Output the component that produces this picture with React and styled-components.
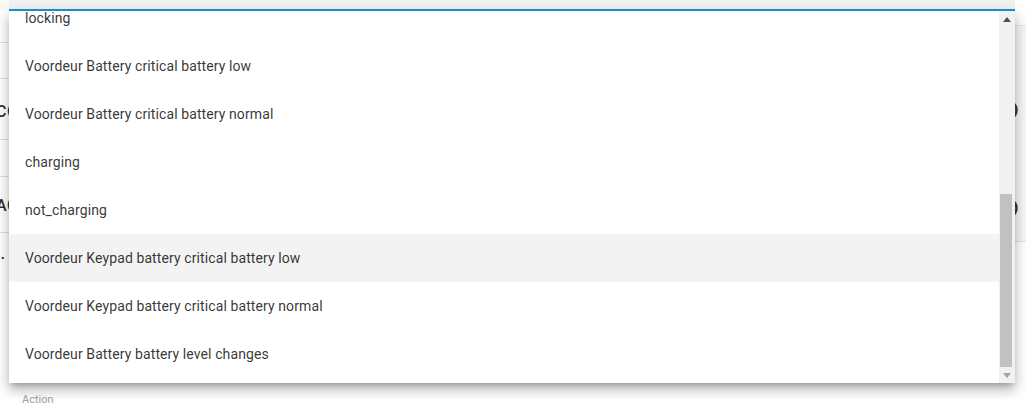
import React from "react";
import styled, { createGlobalStyle } from "styled-components";

const Global = createGlobalStyle`
  html, body { margin: 0; padding: 0; background: #ffffff; }
  body { font-family: Roboto, "Noto Sans", Arial, sans-serif; -webkit-font-smoothing: antialiased; }
  #root { width: 1026px; height: 403px; }
`;

const Page = styled.div`
  position: relative;
  width: 1026px;
  height: 403px;
  overflow: hidden;
  background: #ffffff;
`;

/* ---------- content behind the menu ---------- */
const Behind = styled.div`
  display: flex;
  flex-direction: column;
  height: 100%;
`;

const FieldRow = styled.div`
  display: flex;
  height: 11px;
  flex-shrink: 0;
`;

const FieldGutter = styled.div`
  width: 9px;
  background: #fbfaf6;
`;

const TextField = styled.div`
  width: 1006px;
  background: #f3f2f2;
  border-bottom: 2px solid #1e95d4;
  box-sizing: border-box;
`;

const Body = styled.div`
  display: flex;
  flex: 1;
  min-height: 0;
`;

const LeftColumn = styled.div`
  flex: 1;
  display: flex;
  flex-direction: column;
  margin-left: -4px;
`;

const Row = styled.div`
  height: ${(p) => p.$h}px;
  flex-shrink: 0;
  display: flex;
  align-items: center;
  border-bottom: ${(p) => (p.$line ? "1px solid #e0e0e0" : "none")};
  box-sizing: border-box;
  font-size: 16px;
  font-weight: 500;
  color: #303030;
  letter-spacing: 0.5px;
  padding-top: ${(p) => p.$pt || 0}px;
`;

const Caption = styled.div`
  margin-top: auto;
  margin-bottom: -3px;
  padding: 0 0 0 26px;
  height: 12px;
  font-size: 11px;
  color: #a0a0a0;
  line-height: 12px;
`;

const RightColumn = styled.div`
  width: 11px;
  display: flex;
  flex-direction: column;
`;

const RightCard = styled.div`
  margin-top: 14px;
  height: 215px;
  background: #f6f6f6;
  border-top: 1px solid #e6e6e6;
  border-bottom: 1px solid #e0e0e0;
  display: flex;
  flex-direction: column;
`;

const RoundIconSlot = styled.div`
  height: ${(p) => p.$h}px;
  position: relative;
`;

const RingIcon = styled.svg`
  position: absolute;
  left: -19px;
  top: ${(p) => p.$top}px;
`;

/* ---------- dropdown menu ---------- */
const Menu = styled.div`
  position: absolute;
  left: 9px;
  top: 11px;
  width: 1006px;
  height: 372px;
  background: #ffffff;
  display: flex;
  box-shadow: 0 5px 5px -3px rgba(0, 0, 0, 0.22), 0 8px 10px 1px rgba(0, 0, 0, 0.14),
    0 3px 14px 2px rgba(0, 0, 0, 0.12);
`;

const ListViewport = styled.div`
  flex: 1;
  overflow: hidden;
`;

const List = styled.ul`
  list-style: none;
  margin: -17px 0 0 0;
  padding: 0;
`;

const Item = styled.li`
  height: 48px;
  display: flex;
  align-items: center;
  padding-left: 16px;
  font-size: 14px;
  color: rgba(0, 0, 0, 0.8);
  letter-spacing: 0.1px;
  background: ${(p) => (p.$active ? "#f3f3f3" : "transparent")};
`;

const Scrollbar = styled.div`
  width: 16px;
  background: #f1f1f1;
  display: flex;
  flex-direction: column;
`;

const ArrowButton = styled.div`
  height: 16px;
  display: flex;
  align-items: center;
  justify-content: center;
  padding-right: 1px;
`;

const Track = styled.div`
  flex: 1;
  display: flex;
  flex-direction: column;
  justify-content: flex-end;
`;

const Thumb = styled.div`
  height: 173px;
  margin: 0 3px 0 1px;
  background: #c1c1c1;
`;

const Arrow = ({ up, color }) => (
  <svg width="8" height="5" viewBox="0 0 8 5">
    <polygon points={up ? "0,5 8,5 4,0" : "0,0 8,0 4,5"} fill={color} />
  </svg>
);

const items = [
  "locking",
  "Voordeur Battery critical battery low",
  "Voordeur Battery critical battery normal",
  "charging",
  "not_charging",
  "Voordeur Keypad battery critical battery low",
  "Voordeur Keypad battery critical battery normal",
  "Voordeur Battery battery level changes",
];

export default function App() {
  return (
    <>
      <Global />
      <Page>
        <Behind>
          <FieldRow>
            <FieldGutter />
            <TextField />
          </FieldRow>
          <Body>
            <LeftColumn>
              <Row $h={32} $line />
              <Row $h={36} $line />
              <Row $h={61} $line $pt={4}>CONDITIONS</Row>
              <Row $h={37} $line />
              <Row $h={56} $line $pt={2}>ACTIONS</Row>
              <Row $h={50}>&nbsp;·</Row>
              <Caption>Action</Caption>
            </LeftColumn>
            <RightColumn>
              <RightCard>
                <RoundIconSlot $h={98}>
                  <RingIcon $top={73} width="22" height="22" viewBox="0 0 22 22">
                    <circle cx="11" cy="11" r="9.5" fill="none" stroke="#3a3a3a" strokeWidth="2.5" />
                  </RingIcon>
                </RoundIconSlot>
                <RoundIconSlot $h={98}>
                  <RingIcon $top={73} width="22" height="22" viewBox="0 0 22 22">
                    <circle cx="11" cy="11" r="9.5" fill="none" stroke="#3a3a3a" strokeWidth="2.5" />
                  </RingIcon>
                </RoundIconSlot>
              </RightCard>
            </RightColumn>
          </Body>
        </Behind>

        <Menu>
          <ListViewport>
            <List>
              {items.map((t, i) => (
                <Item key={i} $active={i === 5}>
                  {t}
                </Item>
              ))}
            </List>
          </ListViewport>
          <Scrollbar>
            <ArrowButton>
              <Arrow up color="#505050" />
            </ArrowButton>
            <Track>
              <Thumb />
            </Track>
            <ArrowButton>
              <Arrow color="#a3a3a3" />
            </ArrowButton>
          </Scrollbar>
        </Menu>
      </Page>
    </>
  );
}
